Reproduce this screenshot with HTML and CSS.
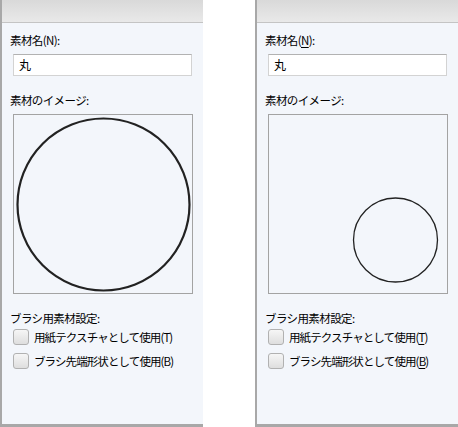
FILE: index.html
```html
<!DOCTYPE html>
<html lang="ja">
<head>
  <meta charset="UTF-8">
  <title>素材のプロパティ</title>
  <link rel="stylesheet" href="styles.css">
</head>
<body>
  <div class="dock">
    <section class="panel">
      <div class="panel-head"></div>
      <div class="panel-body">
        <div class="label">素材名(N):</div>
        <div class="text-input">丸</div>
        <div class="label">素材のイメージ:</div>
        <div class="preview">
          <svg width="178" height="178" viewBox="0 0 178 178">
            <circle cx="89.5" cy="89.5" r="86" fill="none" stroke="#222" stroke-width="2.2"/>
          </svg>
        </div>
        <div class="label">ブラシ用素材設定:</div>
        <div class="check"><span class="box"></span><span>用紙テクスチャとして使用(T)</span></div>
        <div class="check"><span class="box"></span><span>ブラシ先端形状として使用(B)</span></div>
      </div>
    </section>

    <section class="panel">
      <div class="panel-head"></div>
      <div class="panel-body">
        <div class="label">素材名(<u>N</u>):</div>
        <div class="text-input">丸</div>
        <div class="label">素材のイメージ:</div>
        <div class="preview">
          <svg width="178" height="178" viewBox="0 0 178 178">
            <circle cx="126.5" cy="125" r="42" fill="none" stroke="#222" stroke-width="1.3"/>
          </svg>
        </div>
        <div class="label">ブラシ用素材設定:</div>
        <div class="check"><span class="box"></span><span>用紙テクスチャとして使用(<u>T</u>)</span></div>
        <div class="check"><span class="box"></span><span>ブラシ先端形状として使用(<u>B</u>)</span></div>
      </div>
    </section>
  </div>
</body>
</html>
```

FILE: styles.css
```css
body {
  margin: 0;
  background: #fff;
  font-family: "Noto Sans CJK JP", "DejaVu Sans", sans-serif;
  font-size: 11.5px;
  color: #000;
}

.dock {
  display: flex;
  justify-content: space-between;
  height: 427px;
}

.panel {
  width: 201px;
  display: flex;
  flex-direction: column;
  background: #f3f6fb;
  border-left: 2px solid #a8a8a8;
  border-bottom: 3px solid #a8a8a8;
}

.panel-head {
  height: 22px;
  background: linear-gradient(#d9d9d9, #e9e9e9);
  border-bottom: 1px solid #c4c4c4;
}

.panel-body {
  padding: 9px 0 0 8px;
}

.label {
  height: 16px;
  line-height: 16px;
  letter-spacing: -0.6px;
}

.label u, .check u {
  text-decoration-thickness: 1px;
  text-underline-offset: 2px;
}

.text-input {
  margin: 6px 0 16px 3px;
  width: 172px;
  height: 20px;
  line-height: 20px;
  padding-left: 5px;
  background: #fff;
  border: 1px solid #d3d3d3;
  border-top-color: #b2b2b2;
  font-size: 12px;
}

.preview {
  margin: 6px 0 16px 3px;
  width: 178px;
  height: 178px;
  border: 1px solid #a3a3a3;
}

.preview svg {
  display: block;
}

.check {
  display: flex;
  align-items: center;
  gap: 5px;
  margin: 2px 0 0 3px;
  height: 18px;
  letter-spacing: -0.9px;
}

.check + .check {
  margin-top: 6px;
}

.box {
  width: 14px;
  height: 14px;
  border: 1px solid #b1b1b1;
  border-radius: 3px;
  background: linear-gradient(#f6f6f6, #dedede);
}
```
